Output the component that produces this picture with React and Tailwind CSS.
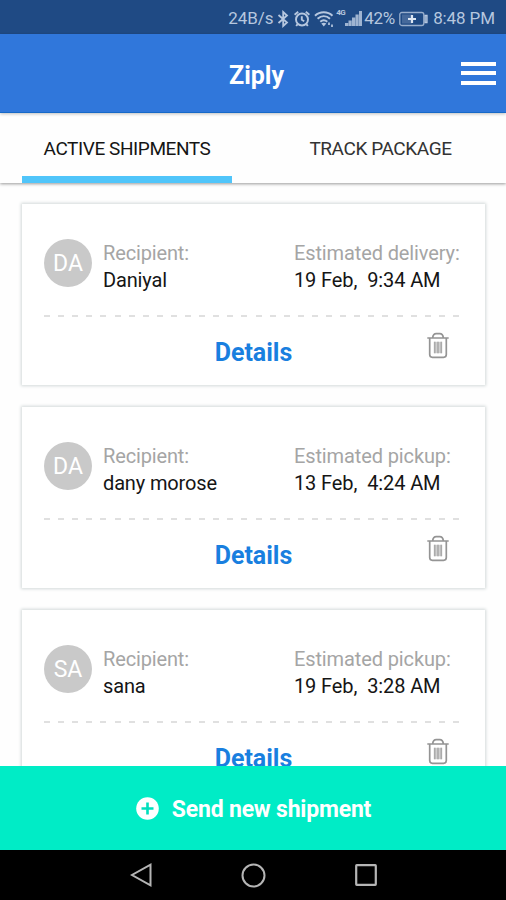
const shipments = [
  { initials: "DA", name: "Daniyal", label: "Estimated delivery:", date: "19 Feb,", time: "9:34 AM" },
  { initials: "DA", name: "dany morose", label: "Estimated pickup:", date: "13 Feb,", time: "4:24 AM" },
  { initials: "SA", name: "sana", label: "Estimated pickup:", date: "19 Feb,", time: "3:28 AM" },
];

function BluetoothIcon() {
  return (
    <svg width="12" height="18" viewBox="0 0 12 18" fill="none" stroke="currentColor" strokeWidth="1.8">
      <path d="M1.5 5 10 12.5 6.200 16V2L10 5.500 1.500 13" />
    </svg>
  );
}

function AlarmIcon() {
  return (
    <svg width="16" height="18" viewBox="0 0 16 18" fill="none" stroke="currentColor" strokeWidth="1.9">
      <circle cx="8" cy="9.5" r="6" />
      <path d="M7.8 6.2v3.6l2.4 1.5M.6 4.8 4.2 1.800M15.4 4.8 11.800 1.800M3.6 14.2 2.2 16M12.4 14.2l1.4 1.8" />
    </svg>
  );
}

function WifiIcon() {
  return (
    <svg width="20" height="18" viewBox="0 0 20 18" fill="none" stroke="currentColor" strokeWidth="2">
      <path d="M1 5.8c5-4.6 12.500-4.600 17.500 0M3.600 8.800c3.700-3.300 8.700-3.300 12.400 0M6.300 11.800c2.100-1.900 4.900-1.900 7 0" />
      <path d="m9.800 16.500-2.500-2.900c1.500-1.100 3.500-1.100 5 0z" fill="currentColor" stroke="none" />
      <path d="M15 12.500v2.500M18 14.500v2.500" strokeWidth="1.700" />
    </svg>
  );
}

function SignalIcon() {
  return (
    <svg width="17" height="17" viewBox="0 0 17 17" fill="currentColor" opacity=".85">
      <path d="M0 13h3.200v3H0zM3.500 10.500h3.200V16H3.500zM7 7.500h3.200V16H7zM10.500 4.500h3.200V16h-3.200zM14 1h3v15h-3z" />
    </svg>
  );
}

function BatteryIcon() {
  return (
    <svg width="29" height="16" viewBox="0 0 29 16" fill="none" stroke="currentColor" strokeWidth="1.300">
      <rect x=".8" y="1.500" width="24" height="13" rx="2" strokeOpacity=".8" />
      <path d="M26 4.500h2v7h-2z" fill="currentColor" fillOpacity=".5" />
      <path d="M3 3.500h10v9H3z" fill="currentColor" stroke="none" opacity=".25" />
      <path d="M9 8h8M13 4v8" stroke="#dce6f2" strokeWidth="2.200" />
    </svg>
  );
}

function TrashIcon() {
  return (
    <svg width="22" height="27" viewBox="0 0 22 27" fill="none" stroke="#949494" strokeWidth="1.700">
      <path d="M.3 6h21.400M2.700 6v16.600q0 2.700 2.700 2.700h11.200q2.700 0 2.700-2.700V6M5.600 5.800C6 3 7.300 1.600 9.200 1.600h3.600c1.900 0 3.200 1.400 3.600 4.200" />
      <path d="M6.900 9.800h8.200v11.400H6.900z" fill="#d0d0d0" stroke="none" />
      <path d="M7.700 9.800v11.400M11 9.800v11.400M14.300 9.800v11.400" stroke="#aaaaaa" strokeWidth="1.600" />
    </svg>
  );
}

function Shipment({ item }) {
  return (
    <article className="h-[181px] shrink-0 bg-white px-[22px] pt-[35px] shadow-[0_0_3px_1px_#d2d8d9]">
      <div className="flex h-[76px]">
        <div className="flex size-12 items-center justify-center rounded-full bg-[#c9c9c9] pt-[3px] text-[23px] text-white">
          {item.initials}
        </div>
        <div className="ml-[11px] w-[191px] pt-[1px] text-[20px] leading-[27px] tracking-[-0.15px]">
          <p className="text-[#a5a5a5]">Recipient:</p>
          <p className="text-[#151515]">{item.name}</p>
        </div>
        <div className="whitespace-nowrap pt-[1px] text-[20px] leading-[27px] tracking-[-0.12px]">
          <p className="text-[#a5a5a5]">{item.label}</p>
          <p className="flex gap-[10px] text-[#151515]">
            <span>{item.date}</span>
            <span>{item.time}</span>
          </p>
        </div>
      </div>
      <div className="h-[2px] w-[416px] bg-[repeating-linear-gradient(90deg,#e0e0e0_0px,#e0e0e0_6px,transparent_6px,transparent_14.1px)]" />
      <div className="grid h-[67px] grid-cols-[1fr_auto_1fr] pt-[15px]">
        <span />
        <button className="mt-[1px] flex h-[40px] items-center text-[25px] font-bold text-[#197fdf]">Details</button>
        <button className="mr-[14px] flex h-[27px] justify-end" aria-label="Delete shipment">
          <TrashIcon />
        </button>
      </div>
    </article>
  );
}

export default function App() {
  return (
    <div className="flex h-[900px] w-[506px] flex-col overflow-hidden bg-[#fefefe] font-[Roboto,sans-serif]">
      <div className="flex h-[34px] shrink-0 items-center justify-end bg-[#1f4a84] pr-[11px] pt-[3px] text-[17px] text-[#b6c7df]">
        <span className="w-[49px]">24B/s</span>
        <span className="w-[17px]"><BluetoothIcon /></span>
        <span className="w-[20px]"><AlarmIcon /></span>
        <span className="w-[22px]"><WifiIcon /></span>
        <span className="-mt-[11px] w-[9px] text-[8px] font-bold tracking-[-0.5px]">4G</span>
        <span className="w-[19px]"><SignalIcon /></span>
        <span className="w-[35px] tracking-[-0.2px]">42%</span>
        <span className="w-[34px]"><BatteryIcon /></span>
        <span className="whitespace-nowrap tracking-[-0.1px]">8:48 PM</span>
      </div>
      <header className="relative z-20 grid h-[79px] shrink-0 grid-cols-[1fr_auto_1fr] items-center border-b border-[#1769c8] bg-[#3077db] px-[10px] shadow-[0_1px_3px_#00000040]">
        <span />
        <h1 className="pl-[7px] pt-[5px] text-[25px] font-bold text-white">Ziply</h1>
        <button className="flex flex-col gap-[5.500px] justify-self-end" aria-label="Menu">
          <span className="h-[4px] w-[35px] bg-white" />
          <span className="h-[4px] w-[35px] bg-white" />
          <span className="h-[4px] w-[35px] bg-white" />
        </button>
      </header>
      <nav className="relative z-10 flex h-[70px] shrink-0 justify-between bg-[#fefefe] px-[22px] text-[19px] tracking-[-0.42px] shadow-[0_1px_3px_#00000066]">
        <button className="flex w-[210px] items-center justify-center whitespace-nowrap border-b-[7px] border-[#50c5fa] pt-[10px] text-[#151515]">ACTIVE SHIPMENTS</button>
        <button className="flex w-[210px] items-center justify-center whitespace-nowrap border-b-[7px] border-transparent pl-[3px] pt-[10px] text-[#333]">TRACK PACKAGE</button>
      </nav>
      <main className="flex min-h-0 flex-1 flex-col gap-[22px] overflow-hidden pl-[22px] pr-[21px] pt-[21px]">
        {shipments.map((item) => <Shipment key={item.name} item={item} />)}
      </main>
      <button className="flex h-[84px] shrink-0 items-center justify-center gap-[13px] bg-[#00ecc6] pl-[1px] text-[23px] font-bold text-white">
        <svg width="23" height="23" viewBox="0 0 23 23">
          <circle cx="11.500" cy="11.500" r="11.300" fill="#fff" />
          <path d="M5.500 11.500h12M11.500 5.500v12" stroke="#00dfbd" strokeWidth="2.600" />
        </svg>
        <span className="pt-[4px] tracking-[-0.2px]">Send new shipment</span>
      </button>
      <div className="flex h-[50px] shrink-0 items-center bg-black pl-[130px]">
        <svg width="22" height="24" viewBox="0 0 22 24" fill="none" stroke="#b5b5b5" strokeWidth="2">
          <path d="M20.500 1.700v20.600L2 12z" />
        </svg>
        <svg className="ml-[89px]" width="25" height="25" viewBox="0 0 25 25" fill="none" stroke="#b5b5b5" strokeWidth="2">
          <circle cx="12.500" cy="12.500" r="11" />
        </svg>
        <svg className="ml-[89px]" width="22" height="22" viewBox="0 0 22 22" fill="none" stroke="#b5b5b5" strokeWidth="2.200">
          <rect x="1.200" y="1.200" width="19.600" height="19.600" rx=".5" />
        </svg>
      </div>
    </div>
  );
}
